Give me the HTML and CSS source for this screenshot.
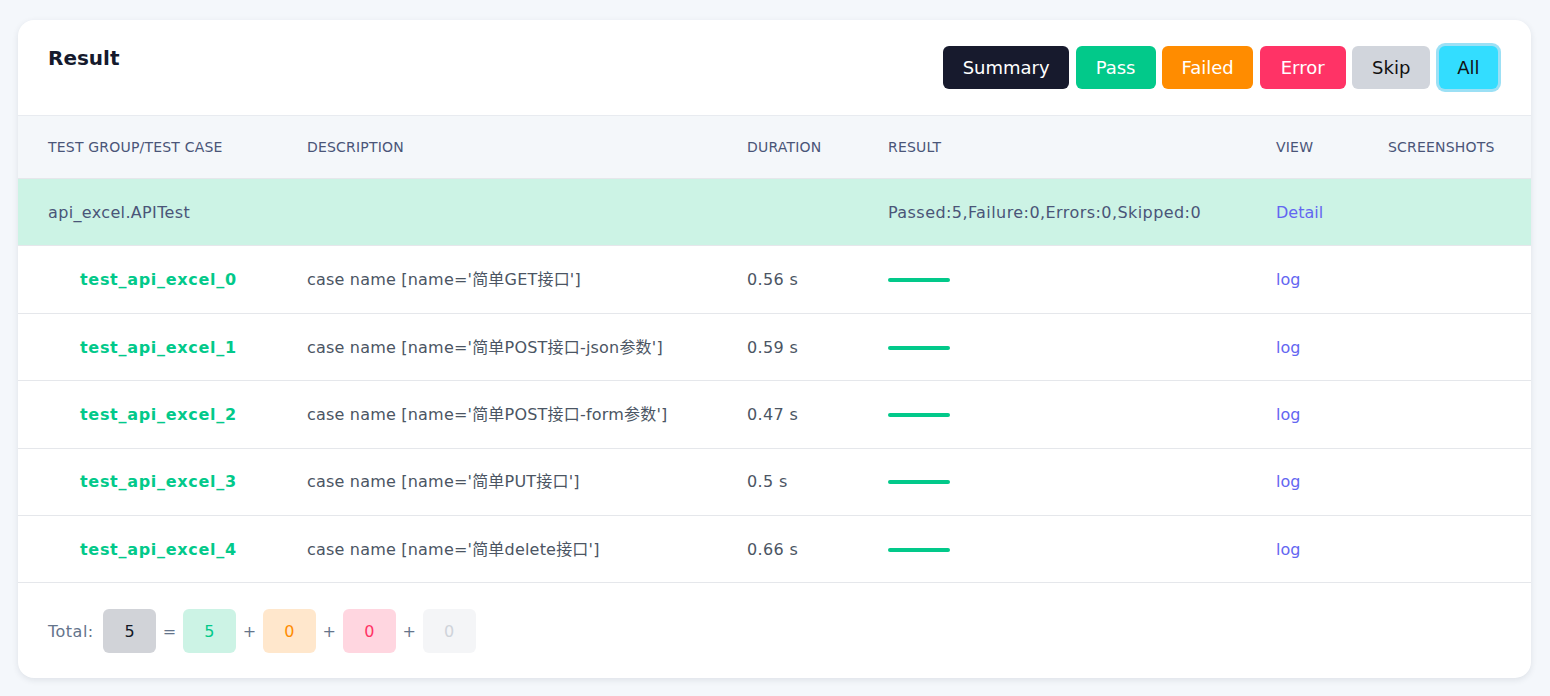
FILE: index.html
```html
<!DOCTYPE html>
<html>
<head>
<meta charset="utf-8">
<title>Result</title>
<link rel="stylesheet" href="styles.css">
</head>
<body>
<div class="card">
  <div class="card-head">
    <h2 class="title">Result</h2>
    <div class="filters">
      <button class="btn btn-summary">Summary</button>
      <button class="btn btn-pass">Pass</button>
      <button class="btn btn-failed">Failed</button>
      <button class="btn btn-error">Error</button>
      <button class="btn btn-skip">Skip</button>
      <button class="btn btn-all">All</button>
    </div>
  </div>
  <table class="results">
    <colgroup>
      <col class="c1"><col class="c2"><col class="c3"><col class="c4"><col class="c5"><col class="c6">
    </colgroup>
    <thead>
      <tr>
        <th>Test Group/Test case</th>
        <th>Description</th>
        <th>Duration</th>
        <th>Result</th>
        <th>View</th>
        <th>Screenshots</th>
      </tr>
    </thead>
    <tbody>
      <tr class="group">
        <td>api_excel.APITest</td>
        <td></td>
        <td></td>
        <td class="summary">Passed:5,Failure:0,Errors:0,Skipped:0</td>
        <td class="view"><a class="link">Detail</a></td>
        <td></td>
      </tr>
      <tr class="case">
        <td class="name">test_api_excel_0</td>
        <td class="desc">case name [name='简单GET接口']</td>
        <td class="dur">0.56 s</td>
        <td><span class="bar"></span></td>
        <td class="view"><a class="link">log</a></td>
        <td></td>
      </tr>
      <tr class="case">
        <td class="name">test_api_excel_1</td>
        <td class="desc">case name [name='简单POST接口-json参数']</td>
        <td class="dur">0.59 s</td>
        <td><span class="bar"></span></td>
        <td class="view"><a class="link">log</a></td>
        <td></td>
      </tr>
      <tr class="case">
        <td class="name">test_api_excel_2</td>
        <td class="desc">case name [name='简单POST接口-form参数']</td>
        <td class="dur">0.47 s</td>
        <td><span class="bar"></span></td>
        <td class="view"><a class="link">log</a></td>
        <td></td>
      </tr>
      <tr class="case">
        <td class="name">test_api_excel_3</td>
        <td class="desc">case name [name='简单PUT接口']</td>
        <td class="dur">0.5 s</td>
        <td><span class="bar"></span></td>
        <td class="view"><a class="link">log</a></td>
        <td></td>
      </tr>
      <tr class="case">
        <td class="name">test_api_excel_4</td>
        <td class="desc">case name [name='简单delete接口']</td>
        <td class="dur">0.66 s</td>
        <td><span class="bar"></span></td>
        <td class="view"><a class="link">log</a></td>
        <td></td>
      </tr>
    </tbody>
  </table>
  <div class="totals">
    <span class="total-label">Total:</span>
    <span class="box box-total">5</span>
    <span class="op">=</span>
    <span class="box box-pass">5</span>
    <span class="op">+</span>
    <span class="box box-fail">0</span>
    <span class="op">+</span>
    <span class="box box-error">0</span>
    <span class="op">+</span>
    <span class="box box-skip">0</span>
  </div>
</div>
</body>
</html>
```

FILE: styles.css
```css
* { box-sizing: border-box; }

html, body {
  margin: 0;
  background: #f4f7fb;
}

body {
  padding: 20px 19px 20px 18px;
  font-family: "DejaVu Sans", "Noto Sans CJK SC", sans-serif;
  color: #4b5563;
}

.card {
  background: #ffffff;
  border-radius: 16px;
  box-shadow: 0 2px 6px rgba(30, 41, 59, 0.10);
  overflow: hidden;
}

.card-head {
  display: flex;
  justify-content: space-between;
  align-items: flex-start;
  padding: 26px 30px 26px 30px;
  border-bottom: 1px solid #e8ebf0;
}

.title {
  margin: 0;
  margin-top: -2px;
  font-size: 20px;
  line-height: 28px;
  font-weight: bold;
  color: #151a2d;
}

.filters {
  display: flex;
  gap: 6.5px;
}

.btn {
  height: 43px;
  padding: 0 20px;
  border: none;
  border-radius: 6px;
  font-family: "DejaVu Sans", sans-serif;
  font-size: 18px;
  line-height: 43px;
  color: #ffffff;
  cursor: pointer;
}

.btn-summary { background: #171a2d; padding: 0 19.5px; }
.btn-pass { background: #02c98a; }
.btn-failed { background: #ff8c00; padding: 0 19.5px; }
.btn-error { background: #ff3366; padding: 0 21px; }
.btn-skip { background: #d1d5dc; color: #111111; }
.btn-all {
  background: #33ddff;
  color: #111111;
  padding: 0 18.4px;
  margin-left: 2px;
  margin-right: 3px;
  box-shadow: 0 0 0 3px rgba(74, 198, 236, 0.55);
}

.results {
  width: 100%;
  border-collapse: collapse;
  table-layout: fixed;
}

.c1 { width: 259px; }
.c2 { width: 440px; }
.c3 { width: 141px; }
.c4 { width: 388px; }
.c5 { width: 112px; }
.c6 { width: 173px; }

.results th {
  background: #f4f7fa;
  padding: 21px 0 21px 30px;
  text-align: left;
  font-size: 14px;
  line-height: 20px;
  letter-spacing: 0.2px;
  font-weight: normal;
  text-transform: uppercase;
  color: #4a5578;
  border-bottom: 1px solid #e5e7eb;
}

.results td {
  padding: 21.9px 0 20.5px 30px;
  font-size: 16px;
  line-height: 24px;
  white-space: nowrap;
  border-bottom: 1px solid #e5e7eb;
  vertical-align: middle;
}

.group td {
  background: #ccf3e5;
  color: #4a5578;
  letter-spacing: 0.35px;
}

.group td.summary { letter-spacing: 0.43px; }

.results td.view { letter-spacing: 0; }

.case td { color: #4b5563; }

.case td.desc { letter-spacing: 0.2px; }
.case td.dur { letter-spacing: 0.35px; }

.case td.name {
  padding-left: 62px;
  font-weight: bold;
  letter-spacing: 0.7px;
  color: #02c98a;
}

.link {
  color: #6366f1;
  cursor: pointer;
}

.bar {
  display: block;
  width: 62px;
  height: 4px;
  border-radius: 2px;
  background: #02c98a;
}

.totals {
  display: flex;
  align-items: center;
  gap: 6.75px;
  padding: 26px 30px 25px 30px;
  font-size: 16px;
}

.total-label {
  width: 48.25px;
  color: #64748b;
  letter-spacing: 0.5px;
}

.op {
  color: #64748b;
  font-size: 16px;
}

.box {
  width: 53px;
  height: 44px;
  border-radius: 6px;
  display: flex;
  align-items: center;
  justify-content: center;
}

.box-total { background: #d1d3d8; color: #111827; }
.box-pass { background: #ccf3e5; color: #02c98a; }
.box-fail { background: #ffe7cc; color: #ff8c00; }
.box-error { background: #ffd6e0; color: #ff3366; }
.box-skip { background: #f4f5f7; color: #cfd3da; }
```
